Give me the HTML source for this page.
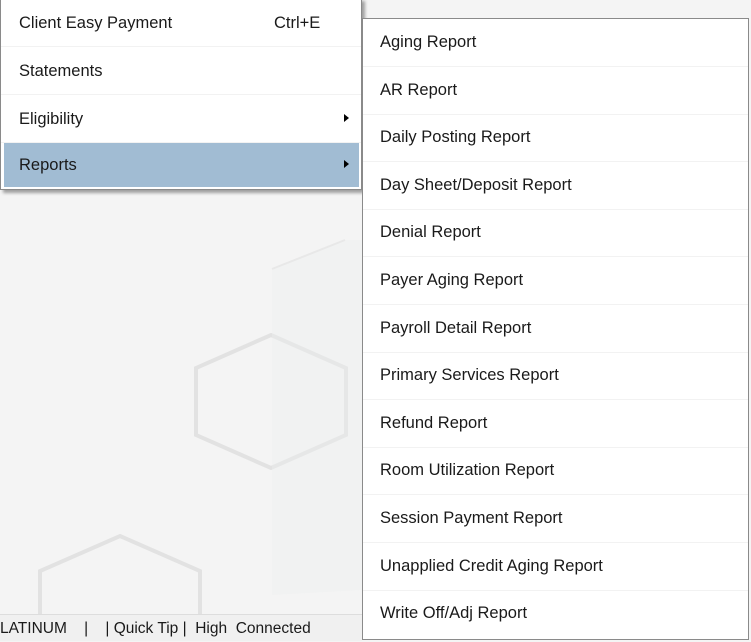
<!DOCTYPE html>
<html><head><style>
body{margin:0;width:751px;height:640px;overflow:hidden;background:#f4f4f4;font-family:"Liberation Sans",sans-serif;position:relative;font-size:16.5px;color:#1a1a1a}
.m{position:absolute;background:#fff;border:1px solid #8a8a8a}
.it{position:absolute;left:0;right:0;height:47px;border-bottom:1px solid #f2f2f2}
.it span{position:absolute;top:14px}
.arr{position:absolute;right:12px;top:19px;width:0;height:0;border-left:5px solid #000;border-top:4px solid transparent;border-bottom:4px solid transparent}
.sb{position:absolute;left:0;top:614px;width:362px;height:26px;background:#f0f0f0;border-top:1px solid #ddd;font-size:15.5px;line-height:27px;white-space:pre}
</style></head><body>
<svg width="751" height="640" style="position:absolute;left:0;top:0">
<polygon points="271,335 346,368 346,435 271,468 196,435 196,368" fill="none" stroke="#e2e2e2" stroke-width="4"/>
<polygon points="120,536 200,571 200,640 40,640 40,571" fill="none" stroke="#e2e2e2" stroke-width="4"/>
<polygon points="272,270 346,240 362,240 362,590 272,595" fill="#eef0f1" opacity="0.4"/>
<polyline points="272,269 345,240" fill="none" stroke="#e8e8e8" stroke-width="2"/>
</svg>
<div class="m" style="left:0;top:-2px;width:360px;height:190px;box-shadow:3px 3px 3px rgba(0,0,0,.35)">
<div class="it" style="top:0"><span style="left:18px;top:15px">Client Easy Payment</span><span style="left:273px;top:15px">Ctrl+E</span></div>
<div class="it" style="top:48px"><span style="left:18px;top:15px">Statements</span></div>
<div class="it" style="top:96px"><span style="left:18px;top:15px">Eligibility</span><div class="arr"></div></div>
<div class="it" style="top:144px;left:3px;right:2px;height:44px;background:#a1bcd3;border:0"><span style="left:15px;top:13px">Reports</span><div class="arr" style="right:10px;top:17px"></div></div>
</div>
<div class="m" style="left:362px;top:18px;width:385px;height:620px;border-bottom:1px solid #8a8a8a">
<div class="it" style="top:0"><span style="left:17px">Aging Report</span></div>
<div class="it" style="top:47.6px"><span style="left:17px">AR Report</span></div>
<div class="it" style="top:95.2px"><span style="left:17px">Daily Posting Report</span></div>
<div class="it" style="top:142.8px"><span style="left:17px">Day Sheet/Deposit Report</span></div>
<div class="it" style="top:190.4px"><span style="left:17px">Denial Report</span></div>
<div class="it" style="top:238px"><span style="left:17px">Payer Aging Report</span></div>
<div class="it" style="top:285.6px"><span style="left:17px">Payroll Detail Report</span></div>
<div class="it" style="top:333.2px"><span style="left:17px">Primary Services Report</span></div>
<div class="it" style="top:380.8px"><span style="left:17px">Refund Report</span></div>
<div class="it" style="top:428.4px"><span style="left:17px">Room Utilization Report</span></div>
<div class="it" style="top:476px"><span style="left:17px">Session Payment Report</span></div>
<div class="it" style="top:523.6px"><span style="left:17px">Unapplied Credit Aging Report</span></div>
<div class="it" style="top:571.2px;border:0"><span style="left:17px">Write Off/Adj Report</span></div>
</div>
<div class="sb">LATINUM    |    | Quick Tip |  High  Connected</div>
</body></html>
